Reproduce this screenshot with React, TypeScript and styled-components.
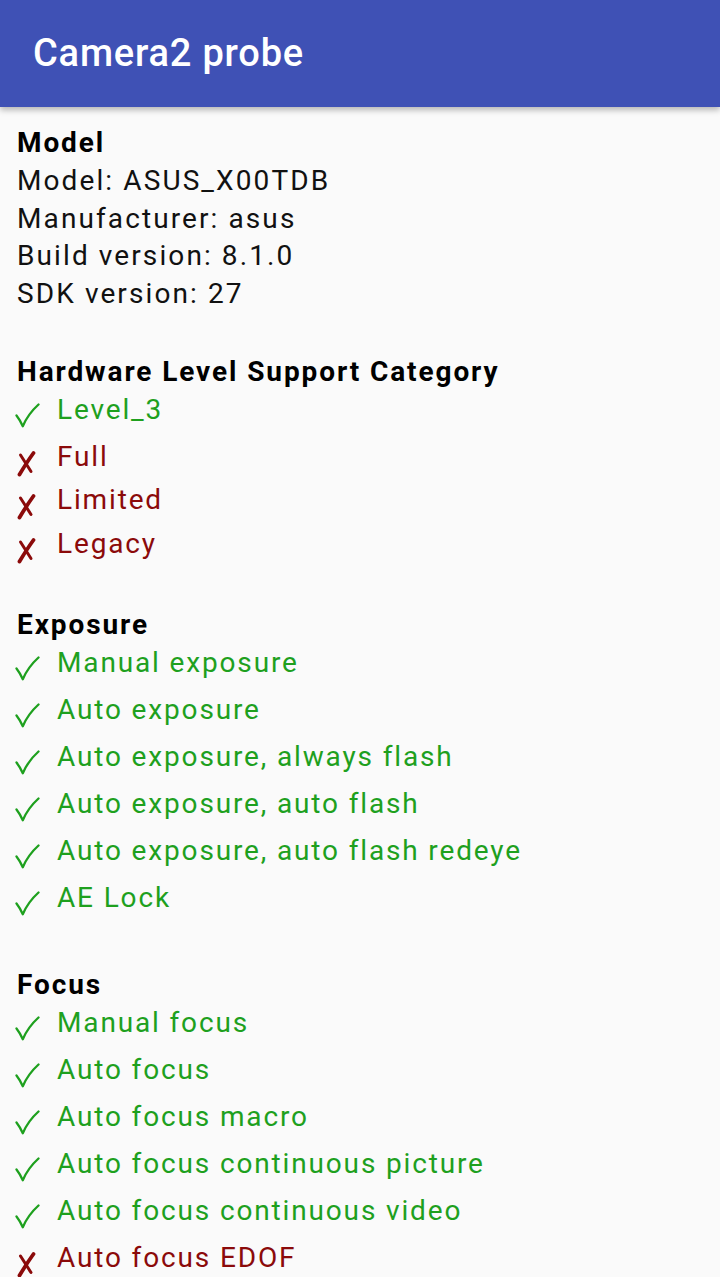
import React from "react";
import styled, { createGlobalStyle } from "styled-components";

const Global = createGlobalStyle`
  html, body { margin: 0; padding: 0; background: #fafafa; }
  body { font-family: Roboto, "Noto Sans", sans-serif; -webkit-font-smoothing: antialiased; }
`;

const Page = styled.div`
  width: 720px;
  min-height: 1277px;
  background: #fafafa;
  overflow: hidden;
`;

const AppBar = styled.header`
  height: 107px;
  background: #3f51b5;
  display: flex;
  align-items: center;
  padding-left: 33px;
  box-shadow: 0 3px 6px rgba(0, 0, 0, 0.28);
  position: relative;
  z-index: 1;
`;

const Title = styled.h1`
  margin: 0;
  color: #ffffff;
  font-size: 38px;
  font-weight: 500;
  letter-spacing: 0.8px;
  padding-bottom: 1px;
`;

const Content = styled.main`
  padding: 17px 0 0 17px;
`;

const Section = styled.section<{ $space: number }>`
  margin-top: ${(p) => p.$space}px;
`;

const Heading = styled.div`
  font-size: 28px;
  font-weight: 700;
  line-height: 38px;
  letter-spacing: 1.9px;
  color: #000;
`;

const InfoLine = styled.div`
  font-size: 28px;
  line-height: 37.5px;
  letter-spacing: 2.1px;
  color: #111;
`;

const Row = styled.div<{ $ok: boolean }>`
  display: flex;
  height: ${(p) => (p.$ok ? 47 : 43.5)}px;
  color: ${(p) => (p.$ok ? "#1ea01e" : "#8b0a0a")};
`;

const Mark = styled.div<{ $ok: boolean }>`
  width: 40px;
  flex: none;
  padding-top: ${(p) => (p.$ok ? 12 : 11)}px;
  margin-left: ${(p) => (p.$ok ? -2 : -1)}px;
  margin-right: ${(p) => (p.$ok ? 2 : 1)}px;
  box-sizing: border-box;
`;

const Label = styled.span`
  font-size: 28px;
  line-height: 38px;
  letter-spacing: 1.85px;
`;

const Check = () => (
  <svg width="26" height="26" viewBox="0 0 26 26" fill="none">
    <path
      d="M1.5 12.5 Q5 17 7.8 23.2 Q13 11 23.5 1.5"
      stroke="currentColor"
      strokeWidth="2.3"
      strokeLinecap="round"
      strokeLinejoin="round"
    />
  </svg>
);

const Cross = () => (
  <svg width="22" height="28" viewBox="0 0 22 28" fill="none">
    <path d="M4.5 6 Q9 13 15 22.5" stroke="currentColor" strokeWidth="3" strokeLinecap="round" />
    <path d="M17.5 4 Q11 13 3.5 25.5" stroke="currentColor" strokeWidth="3.8" strokeLinecap="round" />
  </svg>
);

type Item = { label: string; ok: boolean };

const Feature = ({ label, ok }: Item) => (
  <Row $ok={ok}>
    <Mark $ok={ok}>{ok ? <Check /> : <Cross />}</Mark>
    <Label>{label}</Label>
  </Row>
);

const sections: { title: string; space: number; items: Item[] }[] = [
  {
    title: "Hardware Level Support Category",
    space: 40.5,
    items: [
      { label: "Level_3", ok: true },
      { label: "Full", ok: false },
      { label: "Limited", ok: false },
      { label: "Legacy", ok: false },
    ],
  },
  {
    title: "Exposure",
    space: 37.5,
    items: [
      { label: "Manual exposure", ok: true },
      { label: "Auto exposure", ok: true },
      { label: "Auto exposure, always flash", ok: true },
      { label: "Auto exposure, auto flash", ok: true },
      { label: "Auto exposure, auto flash redeye", ok: true },
      { label: "AE Lock", ok: true },
    ],
  },
  {
    title: "Focus",
    space: 40,
    items: [
      { label: "Manual focus", ok: true },
      { label: "Auto focus", ok: true },
      { label: "Auto focus macro", ok: true },
      { label: "Auto focus continuous picture", ok: true },
      { label: "Auto focus continuous video", ok: true },
      { label: "Auto focus EDOF", ok: false },
    ],
  },
];

export default function App() {
  return (
    <Page>
      <Global />
      <AppBar>
        <Title>Camera2 probe</Title>
      </AppBar>
      <Content>
        <Section $space={0}>
          <Heading>Model</Heading>
          <InfoLine>Model: ASUS_X00TDB</InfoLine>
          <InfoLine>Manufacturer: asus</InfoLine>
          <InfoLine>Build version: 8.1.0</InfoLine>
          <InfoLine>SDK version: 27</InfoLine>
        </Section>
        {sections.map((s) => (
          <Section key={s.title} $space={s.space}>
            <Heading>{s.title}</Heading>
            {s.items.map((it) => (
              <Feature key={it.label} {...it} />
            ))}
          </Section>
        ))}
      </Content>
    </Page>
  );
}
